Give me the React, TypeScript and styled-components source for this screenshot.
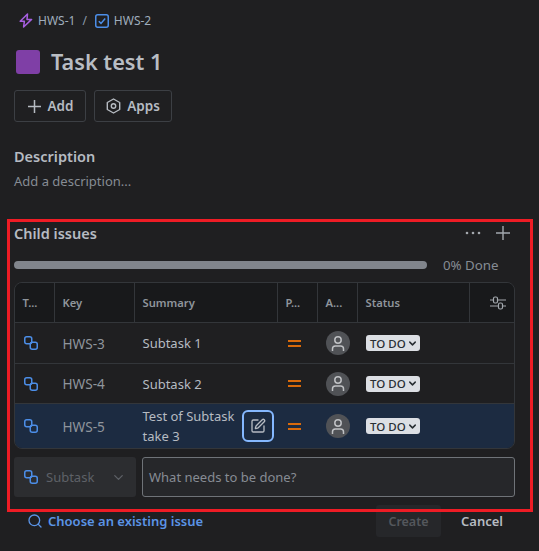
import React from "react";
import styled, { createGlobalStyle } from "styled-components";
import { ChevronDown, Search, SquarePen } from "lucide-react";

const GlobalStyle = createGlobalStyle`
  html, body {
    margin: 0;
    padding: 0;
    background: #1f1f21;
  }
  * {
    box-sizing: border-box;
  }
`;

const Page = styled.div`
  width: 539px;
  height: 551px;
  overflow: hidden;
  padding: 12px 24px 0 14px;
  background: #1f1f21;
  color: #b6c2cf;
  font-family: "Noto Sans", "Open Sans", sans-serif;
`;

const Breadcrumbs = styled.div`
  display: flex;
  align-items: center;
  height: 17px;
  padding-left: 5px;
  font-size: 12px;
  color: #9fadbc;

  svg {
    flex: none;
  }
`;

const Crumb = styled.span`
  margin-left: 5px;
`;

const Slash = styled.span`
  margin: 0 8px 0 7px;
  color: #8c9bab;
`;

const TitleRow = styled.div`
  display: flex;
  align-items: center;
  gap: 11px;
  margin-top: 19px;
  padding-left: 2px;
`;

const Swatch = styled.div`
  width: 24px;
  height: 24px;
  border-radius: 3px;
  background: #7f3fa6;
`;

const Title = styled.h1`
  margin: 0;
  font-size: 21.7px;
  line-height: 28px;
  font-weight: 600;
  color: #b9bdc3;
`;

const Actions = styled.div`
  display: flex;
  gap: 8px;
  margin-top: 14px;
`;

const ActionButton = styled.button<{ $w: number }>`
  display: flex;
  align-items: center;
  justify-content: center;
  gap: 6px;
  width: ${(p) => p.$w}px;
  height: 32px;
  padding: 0;
  border: 1px solid #3c3f44;
  border-radius: 3px;
  background: transparent;
  color: #b6bbc2;
  font: 600 13.5px "Noto Sans", sans-serif;
`;

const SectionTitle = styled.h2`
  margin: 0;
  font-size: 14.5px;
  line-height: 20px;
  font-weight: 600;
  color: #b6bbc2;
`;

const DescriptionBlock = styled.div`
  margin-top: 24px;
`;

const Placeholder = styled.div`
  margin-top: 5px;
  font-size: 13px;
  line-height: 20px;
  color: #868c94;
`;

const ChildSection = styled.section`
  position: relative;
  margin-top: 32px;

  &::after {
    content: "";
    position: absolute;
    top: -4px;
    left: -7px;
    right: -18px;
    bottom: 25px;
    border: 3px solid #ee1c25;
    pointer-events: none;
    z-index: 2;
  }
`;

const ChildHeader = styled.div`
  display: flex;
  align-items: center;
  justify-content: space-between;
  height: 20px;
`;

const HeaderTools = styled.div`
  display: flex;
  align-items: center;
  gap: 15px;
  margin-right: 5px;
`;

const Progress = styled.div`
  display: flex;
  align-items: center;
  gap: 16px;
  margin-top: 12px;
  height: 20px;
`;

const ProgressBar = styled.div`
  width: 413px;
  height: 8px;
  border-radius: 4px;
  background: #81858c;
`;

const ProgressLabel = styled.span`
  font-size: 13.3px;
  color: #868c94;
`;

const Table = styled.div`
  margin-top: 7px;
  border: 1px solid #33363a;
  border-radius: 8px;
  overflow: hidden;
  width: 501px;
`;

const columns = "40px 80px 143px 40px 40px 112px 1fr";

const HeadRow = styled.div`
  display: grid;
  grid-template-columns: ${columns};
  height: 40px;
  margin-right: -1px;
  background: #18191b;
  border-bottom: 1px solid #33363a;
`;

const HeadCell = styled.div<{ $end?: boolean }>`
  display: flex;
  align-items: center;
  padding-left: 7.5px;
  font-size: 11.2px;
  font-weight: 600;
  color: #8f959c;
  border-right: ${(p) => (p.$end ? "none" : "1px solid #33363a")};
`;

const Row = styled.div<{ $active?: boolean; $h: number }>`
  display: grid;
  grid-template-columns: ${columns};
  height: ${(p) => p.$h}px;
  margin-right: -1px;
  background: ${(p) => (p.$active ? "#1c2b41" : "#1f1f21")};
  border-bottom: ${(p) => (p.$active ? "none" : "1px solid #33363a")};
`;

const Cell = styled.div`
  display: flex;
  align-items: center;
  padding-left: 7.5px;
  min-width: 0;
`;

const TypeCell = styled(Cell)`
  padding-left: 9px;
`;

const IssueKey = styled.span`
  font-size: 13.6px;
  color: #8f959c;
`;

const Summary = styled.span`
  flex: 1;
  font-size: 13px;
  line-height: 20px;
  color: #b6bbc2;
`;

const EditButton = styled.button`
  flex: none;
  display: flex;
  align-items: center;
  justify-content: center;
  width: 32px;
  height: 32px;
  margin-right: 4px;
  padding: 0;
  border: 2px solid #85b8ff;
  border-radius: 6px;
  background: transparent;
  color: #b6bbc2;
`;

const Priority = styled.span`
  width: 12.5px;
  height: 7px;
  margin-left: 2.5px;
  border-top: 2px solid #d96a0b;
  border-bottom: 2px solid #d96a0b;
`;

const Avatar = styled.span`
  display: flex;
  align-items: center;
  justify-content: center;
  width: 24px;
  height: 24px;
  margin-left: 0.5px;
  border-radius: 50%;
  background: #505256;
`;

const StatusPill = styled.span`
  display: flex;
  align-items: center;
  gap: 1px;
  height: 16px;
  padding: 0 2px 0 4px;
  margin-left: 0.5px;
  border-radius: 3px;
  background: #dcdfe4;
  color: #282e33;
  font-size: 11.5px;
  font-weight: 500;
`;

const CreateForm = styled.div`
  display: flex;
  gap: 6px;
  margin-top: 8px;
  width: 501px;
`;

const TypeSelect = styled.div`
  display: flex;
  align-items: center;
  width: 122px;
  height: 40px;
  padding: 0 10px;
  flex: none;
  border-radius: 3px;
  background: #2c2d30;
  color: #5e6167;
  font-size: 13px;
`;

const TypeLabel = styled.span`
  flex: 1;
  margin-left: 8px;
`;

const SummaryInput = styled.div`
  display: flex;
  align-items: center;
  flex: 1;
  height: 40px;
  padding: 0 6px;
  border: 1px solid #6f7378;
  border-radius: 3px;
  background: #26272a;
  color: #868c94;
  font-size: 13px;
`;

const Footer = styled.div`
  display: flex;
  align-items: center;
  margin-top: 8px;
  height: 32px;
  width: 501px;
  padding-left: 13px;
`;

const ExistingLink = styled.a`
  flex: 1;
  display: flex;
  align-items: center;
  gap: 5px;
  color: #5b94e6;
  font-size: 13px;
  font-weight: 600;
`;

const CreateButton = styled.button`
  width: 65px;
  height: 32px;
  padding: 0;
  border: none;
  border-radius: 3px;
  background: #26272a;
  color: #54575c;
  font: 600 12.5px "Noto Sans", sans-serif;
`;

const CancelButton = styled.button`
  width: 62px;
  height: 32px;
  padding: 0;
  margin-left: 10px;
  margin-right: 2px;
  border: none;
  background: transparent;
  color: #b6bbc2;
  font: 600 13px "Noto Sans", sans-serif;
`;

function SubtaskIcon() {
  return (
    <svg width="14" height="14" viewBox="0 0 14 14" fill="none" stroke="#4c8ee8" strokeWidth="1.5">
      <rect x="0.75" y="0.75" width="7" height="7" rx="2" />
      <rect x="6.25" y="6.25" width="7" height="7" rx="2" />
    </svg>
  );
}

function PersonIcon() {
  return (
    <svg width="16" height="17" viewBox="0 0 16 17" fill="none" stroke="#bfc1c4" strokeWidth="1.5">
      <circle cx="8" cy="5" r="3.2" />
      <path d="M2.5 16v-2.2c0-1.6 1.2-2.8 2.8-2.8h5.4c1.6 0 2.8 1.2 2.8 2.8V16" />
    </svg>
  );
}

const rows = [
  { key: "HWS-3", summary: "Subtask 1", h: 41 },
  { key: "HWS-4", summary: "Subtask 2", h: 40 },
  { key: "HWS-5", summary: "Test of Subtask take 3", h: 44, active: true },
];

export default function App() {
  return (
    <Page>
      <GlobalStyle />
      <Breadcrumbs>
        <svg width="14" height="15" viewBox="0 0 14 15" fill="none" stroke="#a65fe0" strokeWidth="1.5" strokeLinejoin="round">
          <path d="M8.5 1 1.2 8.2h4.2L4.6 14l8-7.6H8z" />
        </svg>
        <Crumb>HWS-1</Crumb>
        <Slash>/</Slash>
        <svg width="14" height="14" viewBox="0 0 14 14" fill="none">
          <rect x="0.75" y="0.75" width="12.5" height="12.5" rx="2" stroke="#4c8ee8" strokeWidth="1.5" />
          <path d="M3.8 7.2 6 9.4l4.2-4.8" stroke="#4c8ee8" strokeWidth="1.5" />
        </svg>
        <Crumb>HWS-2</Crumb>
      </Breadcrumbs>

      <TitleRow>
        <Swatch />
        <Title>Task test 1</Title>
      </TitleRow>

      <Actions>
        <ActionButton $w={72}>
          <svg width="15" height="15" viewBox="0 0 15 15" stroke="#b6bbc2" strokeWidth="1.5">
            <path d="M7.5 1v13M1 7.5h13" />
          </svg>
          Add
        </ActionButton>
        <ActionButton $w={78}>
          <svg width="15" height="16" viewBox="0 0 15 16" fill="none" stroke="#b6bbc2" strokeWidth="1.4" strokeLinejoin="round">
            <path d="M7.5 1 13.7 4.5v7L7.5 15l-6.2-3.5v-7z" />
            <circle cx="7.5" cy="8" r="2.2" />
          </svg>
          Apps
        </ActionButton>
      </Actions>

      <DescriptionBlock>
        <SectionTitle>Description</SectionTitle>
        <Placeholder>Add a description...</Placeholder>
      </DescriptionBlock>

      <ChildSection>
        <ChildHeader>
          <SectionTitle>Child issues</SectionTitle>
          <HeaderTools>
            <svg width="16" height="4" viewBox="0 0 16 4" fill="#a3a8ae">
              <circle cx="2" cy="2" r="1.3" />
              <circle cx="8" cy="2" r="1.3" />
              <circle cx="14" cy="2" r="1.3" />
            </svg>
            <svg width="14" height="14" viewBox="0 0 14 14" stroke="#a3a8ae" strokeWidth="1.4">
              <path d="M7 0v14M0 7h14" />
            </svg>
          </HeaderTools>
        </ChildHeader>

        <Progress>
          <ProgressBar />
          <ProgressLabel>0% Done</ProgressLabel>
        </Progress>

        <Table>
          <HeadRow>
            <HeadCell>T...</HeadCell>
            <HeadCell>Key</HeadCell>
            <HeadCell>Summary</HeadCell>
            <HeadCell>P...</HeadCell>
            <HeadCell>A...</HeadCell>
            <HeadCell>Status</HeadCell>
            <HeadCell $end>
              <svg width="16" height="14" viewBox="0 0 16 14" fill="none" stroke="#a3a8ae" strokeWidth="1.2" style={{ marginLeft: 12 }}>
                <path d="M0 4h3M8 4h8M0 10h8M13 10h3" />
                <rect x="3.5" y="1" width="4" height="6" rx="1.5" />
                <rect x="8.5" y="7" width="4" height="6" rx="1.5" />
              </svg>
            </HeadCell>
          </HeadRow>
          {rows.map((row) => (
            <Row key={row.key} $h={row.h} $active={row.active}>
              <TypeCell>
                <SubtaskIcon />
              </TypeCell>
              <Cell>
                <IssueKey>{row.key}</IssueKey>
              </Cell>
              <Cell>
                <Summary>{row.summary}</Summary>
                {row.active && (
                  <EditButton>
                    <SquarePen size={16} />
                  </EditButton>
                )}
              </Cell>
              <Cell>
                <Priority />
              </Cell>
              <Cell>
                <Avatar>
                  <PersonIcon />
                </Avatar>
              </Cell>
              <Cell>
                <StatusPill>
                  TO DO
                  <ChevronDown size={11} strokeWidth={3.2} />
                </StatusPill>
              </Cell>
              <Cell />
            </Row>
          ))}
        </Table>

        <CreateForm>
          <TypeSelect>
            <SubtaskIcon />
            <TypeLabel>Subtask</TypeLabel>
            <ChevronDown size={15} color="#5e6167" />
          </TypeSelect>
          <SummaryInput>What needs to be done?</SummaryInput>
        </CreateForm>

        <Footer>
          <ExistingLink>
            <Search size={16} />
            Choose an existing issue
          </ExistingLink>
          <CreateButton>Create</CreateButton>
          <CancelButton>Cancel</CancelButton>
        </Footer>
      </ChildSection>
    </Page>
  );
}
